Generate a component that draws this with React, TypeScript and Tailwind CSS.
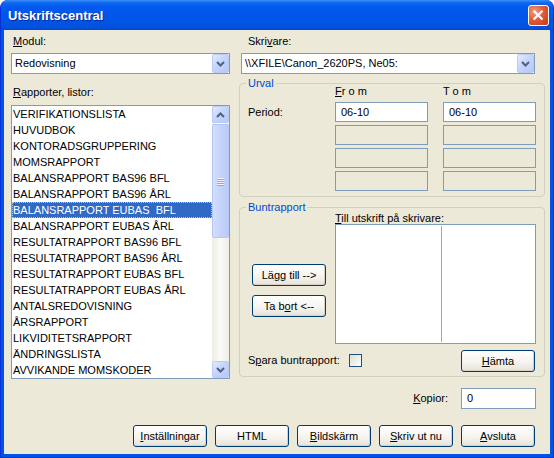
import type { ReactNode } from 'react';

const reports = [
  'VERIFIKATIONSLISTA',
  'HUVUDBOK',
  'KONTORADSGRUPPERING',
  'MOMSRAPPORT',
  'BALANSRAPPORT BAS96 BFL',
  'BALANSRAPPORT BAS96 ÅRL',
  'BALANSRAPPORT EUBAS  BFL',
  'BALANSRAPPORT EUBAS ÅRL',
  'RESULTATRAPPORT BAS96 BFL',
  'RESULTATRAPPORT BAS96 ÅRL',
  'RESULTATRAPPORT EUBAS BFL',
  'RESULTATRAPPORT EUBAS ÅRL',
  'ANTALSREDOVISNING',
  'ÅRSRAPPORT',
  'LIKVIDITETSRAPPORT',
  'ÄNDRINGSLISTA',
  'AVVIKANDE MOMSKODER',
];
const selected = 6;

function U({ children }: { children: ReactNode }) {
  return <span className="underline decoration-1 underline-offset-[1px]">{children}</span>;
}

function Chevron({ up = false }: { up?: boolean }) {
  return (
    <svg width="9" height="6" viewBox="0 0 9 6">
      <path
        d={up ? 'M1 5 L4.5 1.5 L8 5' : 'M1 1 L4.5 4.5 L8 1'}
        fill="none"
        stroke="#4D6185"
        strokeWidth="2"
      />
    </svg>
  );
}

function ArrowBtn({ up = false, className = '' }: { up?: boolean; className?: string }) {
  return (
    <div
      className={`flex w-[17px] shrink-0 items-center justify-center rounded-[2px] border border-[#BACBF5] bg-[linear-gradient(135deg,#E3EBFE_0%,#C6D5FC_45%,#B6C8F7_100%)] ${className}`}
    >
      <Chevron up={up} />
    </div>
  );
}

function Combo({ value, className = '' }: { value: string; className?: string }) {
  return (
    <div className={`flex h-[21px] items-stretch border border-[#7F9DB9] bg-white ${className}`}>
      <span className="flex-1 truncate pl-[3px] leading-[19px]">{value}</span>
      <ArrowBtn />
    </div>
  );
}

function XpButton({ children, className = '' }: { children: ReactNode; className?: string }) {
  return (
    <button
      className={`h-[22px] w-[74px] shrink-0 rounded-[3px] border border-[#003C74] bg-[linear-gradient(to_bottom,#FFFFFF_0%,#F5F4EF_55%,#E6E3D8_100%)] leading-[20px] text-black shadow-[inset_-1px_-1px_0_#D8D2C6] ${className}`}
    >
      {children}
    </button>
  );
}

function Field({ value, enabled }: { value?: string; enabled: boolean }) {
  return (
    <div
      className={`h-[20px] border border-[#7F9DB9] pl-[5px] leading-[18px] ${enabled ? 'bg-white' : 'bg-[#ECE9D8]'}`}
    >
      {value}
    </div>
  );
}

function Scrollbar() {
  return (
    <div className="flex w-[17px] flex-col bg-[linear-gradient(to_right,#EEEDE5,#FBFBF8_50%,#EEEDE5)]">
      <ArrowBtn up className="h-[17px]" />
      <div className="mt-[1px] flex h-[114px] flex-col items-center justify-center gap-[1px] rounded-[2px] border border-[#B4C6F4] bg-[linear-gradient(to_right,#D3DFFD,#C4D3FB_50%,#B9CBF7)]">
        {[0, 1, 2, 3].map((i) => (
          <div key={i} className="h-[1px] w-[7px] bg-[#EEF3FE] shadow-[0_1px_0_#8CA8EE]" />
        ))}
      </div>
      <div className="flex-1" />
      <ArrowBtn className="h-[17px]" />
    </div>
  );
}

function Group({ title, children, className = '' }: { title: string; children: ReactNode; className?: string }) {
  return (
    <fieldset className={`rounded-[4px] border border-[#D0D0BF] ${className}`}>
      <legend className="ml-[6px] px-[2px] leading-[13px] text-[#0046D5]">{title}</legend>
      {children}
    </fieldset>
  );
}

export default function App() {
  return (
    <div className="h-[458px] w-[554px] overflow-hidden rounded-t-[8px] border-x border-b border-[#0831D9] bg-[#0054E3] font-['Liberation_Sans',Arial,sans-serif] text-[11px] text-black">
      <div className="flex h-[30px] items-center justify-between rounded-t-[7px] bg-[linear-gradient(to_bottom,#3D8DF6_0px,#0A68F0_3px,#0058EE_8px,#0055E5_20px,#0052DE_27px,#0047CF_30px)] pl-[7px] pr-[4px]">
        <span className="pt-[1px] text-[13px] font-bold text-white [text-shadow:1px_1px_0_#0A2A9C]">
          Utskriftscentral
        </span>
        <div className="flex h-[21px] w-[21px] items-center justify-center rounded-[3px] border border-white bg-[radial-gradient(circle_at_30%_30%,#F39C80,#E35B3A_45%,#C63818)]">
          <svg width="21" height="21" viewBox="0 0 21 21">
            <path d="M6 6 L14 14 M14 6 L6 14" stroke="white" strokeWidth="2.4" strokeLinecap="square" />
          </svg>
        </div>
      </div>

      <div className="mx-[3px] mb-[3px] h-[424px] bg-[#ECE9D8] pl-[7px] pr-[5px] pt-[5px]">
        <div className="flex items-start gap-[9px]">
          {/* left column */}
          <div className="w-[219px]">
            <div className="h-[13px] pl-[2px] leading-[13px]">
              <U>M</U>odul:
            </div>
            <Combo value="Redovisning" className="mt-[5px]" />
            <div className="mt-[12px] h-[13px] pl-[2px] leading-[13px]">
              <U>R</U>apporter, listor:
            </div>
            <div className="mt-[6px] flex h-[274px] border border-[#7F9DB9] bg-white">
              <div className="flex-1">
                {reports.map((r, i) => (
                  <div
                    key={r}
                    className={`h-[16px] whitespace-pre border leading-[14px] ${
                      i === selected
                        ? 'border-dotted border-[#E2C56E] bg-[#316AC5] text-white'
                        : 'border-transparent'
                    }`}
                  >
                    {r}
                  </div>
                ))}
              </div>
              <Scrollbar />
            </div>
          </div>

          {/* right column */}
          <div className="w-[306px]">
            <div className="h-[13px] pl-[9px] leading-[13px]">
              Skri<U>v</U>are:
            </div>
            <Combo value="\\XFILE\Canon_2620PS, Ne05:" className="ml-[2px] mt-[5px] w-[294px]" />

            <Group title="Urval" className="mt-[3px] pb-[5px]">
              <div className="-mt-[5px] grid grid-cols-[72px_93px_93px] gap-x-[15px] gap-y-[3px] pl-[8px]">
                <div />
                <div className="mb-[1px] h-[13px] leading-[13px]">
                  <U>F</U>r o m
                </div>
                <div className="mb-[1px] h-[13px] leading-[13px]">T o m</div>
                <div className="leading-[20px]">Period:</div>
                <Field value="06-10" enabled />
                <Field value="06-10" enabled />
                <div />
                <Field enabled={false} />
                <Field enabled={false} />
                <div />
                <Field enabled={false} />
                <Field enabled={false} />
                <div />
                <Field enabled={false} />
                <Field enabled={false} />
              </div>
            </Group>

            <Group title="Buntrapport" className="mt-[4px] pb-[5px]">
              <div className="-mt-[4px] flex gap-[9px] pl-[12px] pr-[8px]">
                <div className="flex w-[74px] flex-col">
                  <XpButton className="mt-[54px]">
                    Lä<U>g</U>g till --&gt;
                  </XpButton>
                  <XpButton className="mt-[9px]">
                    Ta b<U>o</U>rt &lt;--
                  </XpButton>
                </div>
                <div className="flex-1">
                  <div className="h-[13px] leading-[16px]">
                    <U>T</U>ill utskrift på skrivare:
                  </div>
                  <div className="mt-[1px] flex h-[120px] border border-[#7F9DB9] bg-white py-[1px]">
                    <div className="w-[106px] border-r border-[#ACA899]" />
                  </div>
                </div>
              </div>
              <div className="mt-[6px] flex h-[21px] items-center pl-[8px] pr-[8px]">
                <span className="w-[101px]">
                  S<U>p</U>ara buntrapport:
                </span>
                <div className="h-[13px] w-[13px] border border-[#1C5180] bg-[linear-gradient(135deg,#DCDCD7,#FFFFFF)]" />
                <XpButton className="ml-auto mr-[1px] h-[21px] leading-[19px]">
                  <U>H</U>ämta
                </XpButton>
              </div>
            </Group>
          </div>
        </div>

        <div className="mt-[9px] flex items-center justify-end pr-[9px]">
          <span>
            <U>K</U>opior:
          </span>
          <div className="ml-[13px] h-[21px] w-[75px] border border-[#7F9DB9] bg-white pl-[5px] leading-[19px]">
            0
          </div>
        </div>

        <div className="mt-[16px] flex justify-end gap-[8px] pr-[10px]">
          <XpButton>
            <U>I</U>nställningar
          </XpButton>
          <XpButton>HTML</XpButton>
          <XpButton>
            <U>B</U>ildskärm
          </XpButton>
          <XpButton>
            <U>S</U>kriv ut nu
          </XpButton>
          <XpButton>
            <U>A</U>vsluta
          </XpButton>
        </div>
      </div>
    </div>
  );
}
